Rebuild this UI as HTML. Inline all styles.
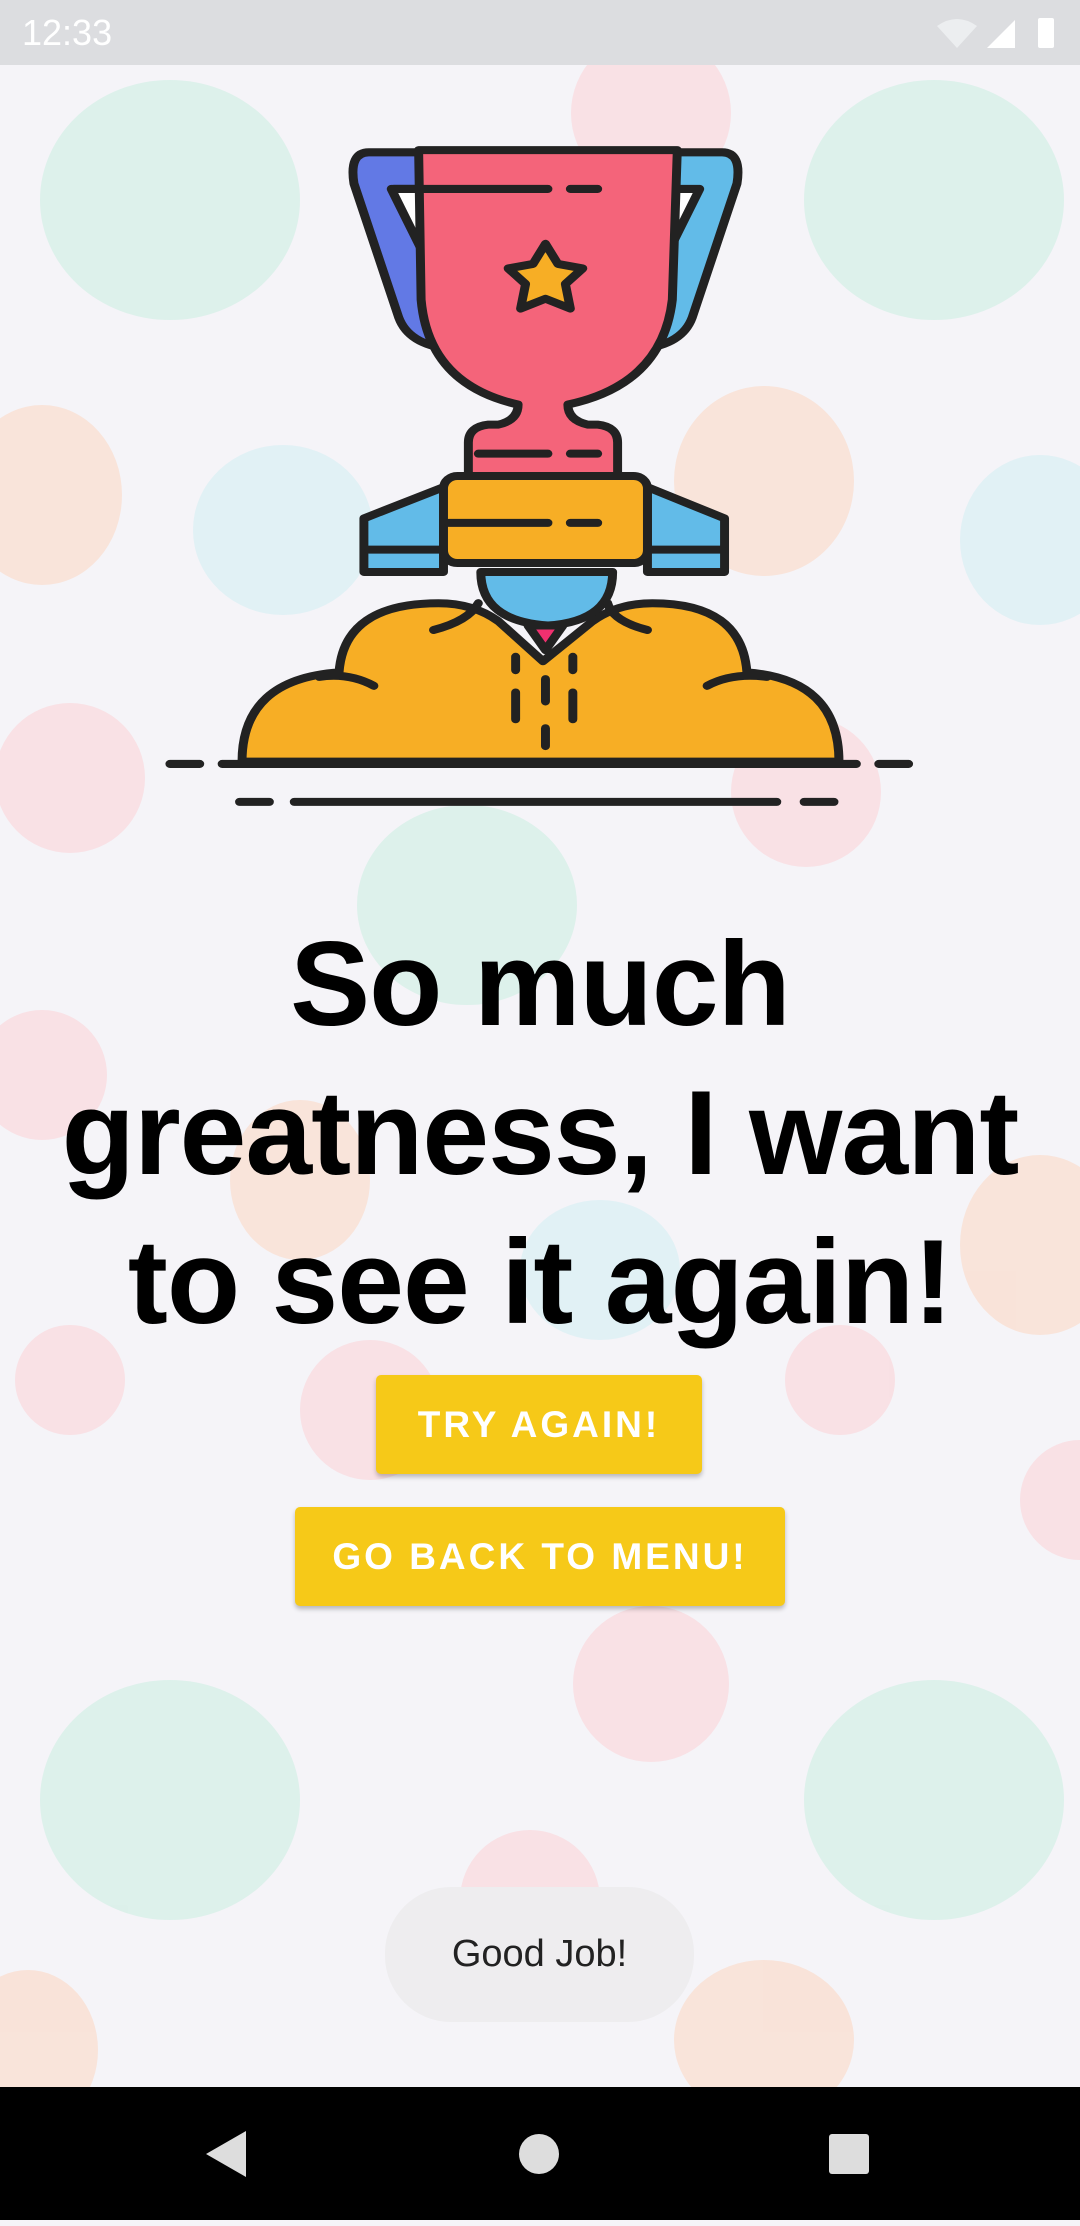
<!DOCTYPE html>
<html><head><meta charset="utf-8"><style>
html,body{margin:0;padding:0}
body{width:1080px;height:2220px;position:relative;overflow:hidden;background:#f5f4f8;font-family:"Liberation Sans",sans-serif}
.bg{position:absolute;left:0;top:0}
.status{position:absolute;left:0;top:0;width:1080px;height:65px;background:#dcdde0;color:#fff;font-size:36px}
.nav{position:absolute;left:0;top:2087px;width:1080px;height:133px;background:#000}
h1{position:absolute;left:0;top:910px;width:1080px;margin:0;text-align:center;font-size:120px;line-height:149px;font-weight:bold;letter-spacing:-1px;color:#000}
.btn{position:absolute;background:#f6c918;color:#fff;font-size:37px;font-weight:bold;letter-spacing:3px;text-align:center;border-radius:5px;box-shadow:0 3px 5px rgba(0,0,0,.25)}
.toast{position:absolute;left:385px;top:1887px;width:309px;height:135px;border-radius:66px;background:#eeedef;color:#222;font-size:38px;text-align:center;line-height:135px}
</style></head><body>
<svg class="bg" width="1080" height="2220" viewBox="0 0 1080 2220">
<g opacity="0.6">
<circle cx="651" cy="113" r="80" fill="#fbd3d8"/><circle cx="70" cy="778" r="75" fill="#fbd3d8"/><circle cx="806" cy="792" r="75" fill="#fbd3d8"/><circle cx="651" cy="1684" r="78" fill="#fbd3d8"/><circle cx="42" cy="1075" r="65" fill="#fbd3d8"/><circle cx="70" cy="1380" r="55" fill="#fbd3d8"/><circle cx="840" cy="1380" r="55" fill="#fbd3d8"/><circle cx="370" cy="1410" r="70" fill="#fbd3d8"/><circle cx="530" cy="1900" r="70" fill="#fbd3d8"/><circle cx="1080" cy="1500" r="60" fill="#fbd3d8"/>
<ellipse cx="170" cy="200" rx="130" ry="120" fill="#cdeee2"/><ellipse cx="934" cy="200" rx="130" ry="120" fill="#cdeee2"/><ellipse cx="170" cy="1800" rx="130" ry="120" fill="#cdeee2"/><ellipse cx="934" cy="1800" rx="130" ry="120" fill="#cdeee2"/><ellipse cx="467" cy="905" rx="110" ry="100" fill="#cdeee2"/>
<ellipse cx="42" cy="495" rx="80" ry="90" fill="#fcd9c6"/><ellipse cx="764" cy="481" rx="90" ry="95" fill="#fcd9c6"/><ellipse cx="1040" cy="1245" rx="80" ry="90" fill="#fcd9c6"/><ellipse cx="764" cy="2040" rx="90" ry="80" fill="#fcd9c6"/><ellipse cx="28" cy="2050" rx="70" ry="80" fill="#fcd9c6"/><ellipse cx="300" cy="1180" rx="70" ry="80" fill="#fcd9c6"/>
<ellipse cx="283" cy="530" rx="90" ry="85" fill="#d3eff3"/><ellipse cx="1040" cy="540" rx="80" ry="85" fill="#d3eff3"/><ellipse cx="600" cy="1270" rx="80" ry="70" fill="#d3eff3"/>
</g>
</svg>
<div class="status"><span style="position:absolute;left:22px;top:12px">12:33</span>
<svg style="position:absolute;left:935px;top:14px" width="130" height="38" viewBox="0 0 130 38"><path d="M2 12 Q22 -2 42 12 L22 34 Z" fill="#eceef0"/><path d="M80 34 L80 6 L52 34 Z" fill="#fff"/><rect x="103" y="4" width="16" height="30" rx="2" fill="#fff"/></svg></div>
<svg style="position:absolute;left:150px;top:130px" width="780" height="700" viewBox="0 0 1568 1568" preserveAspectRatio="none">
<g stroke="#222" stroke-width="18" stroke-linejoin="round" stroke-linecap="round">
<path d="M440,50 L560,50 L600,490 Q520,480 500,420 L410,120 Q400,50 440,50 Z" fill="#6279e5"/>
<path d="M485,132 L545,132 L560,300 Z" fill="#fff"/>
<path d="M1150,50 L1030,50 L990,490 Q1070,480 1090,420 L1180,120 Q1190,50 1150,50 Z" fill="#62bbe8"/>
<path d="M1105,132 L1045,132 L1030,300 Z" fill="#fff"/>
<path d="M430,870 L590,800 L590,990 L430,990 Z" fill="#62bbe8"/>
<path d="M1155,870 L1000,800 L1000,990 L1155,990 Z" fill="#62bbe8"/>
<path d="M185,1415 Q185,1230 380,1215 Q390,1060 580,1060 Q650,1060 700,1100 L790,1190 L890,1100 Q940,1060 1010,1060 Q1190,1060 1200,1215 Q1385,1230 1385,1415 Z" fill="#f7ae25"/>
<path d="M665,990 L930,990 Q930,1100 800,1110 Q665,1100 665,990 Z" fill="#62bbe8"/>
<path d="M760,1110 L830,1110 L795,1165 Z" fill="#f0306f"/>
<path d="M540,45 L1060,45 L1050,380 Q1030,570 840,615 Q840,650 880,660 L900,660 Q940,665 940,700 L940,775 L640,775 L640,700 Q640,665 680,660 L700,660 Q740,650 740,615 Q560,570 545,380 Z" fill="#f4647a"/>
<rect x="590" y="775" width="410" height="195" rx="28" fill="#f7ae25"/>
<path d="M795,255 L820,300 L870,310 L835,345 L845,400 L795,378 L745,400 L755,345 L720,310 L770,300 Z" fill="#f7ae25"/>
<path d="M490,132 L800,132 M845,132 L900,132 M660,725 L800,725 M845,725 L900,725 M600,880 L800,880 M845,880 L900,880 M440,940 L590,940 M1000,940 L1150,940 M570,1120 Q640,1100 660,1060 M1000,1120 Q930,1100 920,1060 M450,1245 Q400,1215 340,1225 M1120,1245 Q1170,1215 1240,1225 M735,1180 L735,1210 M735,1260 L735,1320 M850,1180 L850,1210 M850,1260 L850,1320 M795,1230 L795,1280 M795,1340 L795,1380 M40,1420 L100,1420 M145,1420 L1420,1420 M1465,1420 L1525,1420 M180,1505 L240,1505 M290,1505 L1260,1505 M1315,1505 L1375,1505" fill="none"/>
</g>
</svg>
<h1>So much<br>greatness, I want<br>to see it again!</h1>
<div class="btn" style="left:376px;top:1375px;width:326px;height:99px;line-height:99px">TRY AGAIN!</div>
<div class="btn" style="left:295px;top:1507px;width:490px;height:99px;line-height:99px">GO BACK TO MENU!</div>
<div class="toast">Good Job!</div>
<div class="nav">
<svg width="1080" height="134" viewBox="0 0 1080 134"><path d="M246 44 L246 90 L206 67 Z" fill="#ddd"/><circle cx="539" cy="67" r="20" fill="#ddd"/><rect x="829" y="47" width="40" height="40" rx="3" fill="#ddd"/></svg>
</div>
</body></html>
